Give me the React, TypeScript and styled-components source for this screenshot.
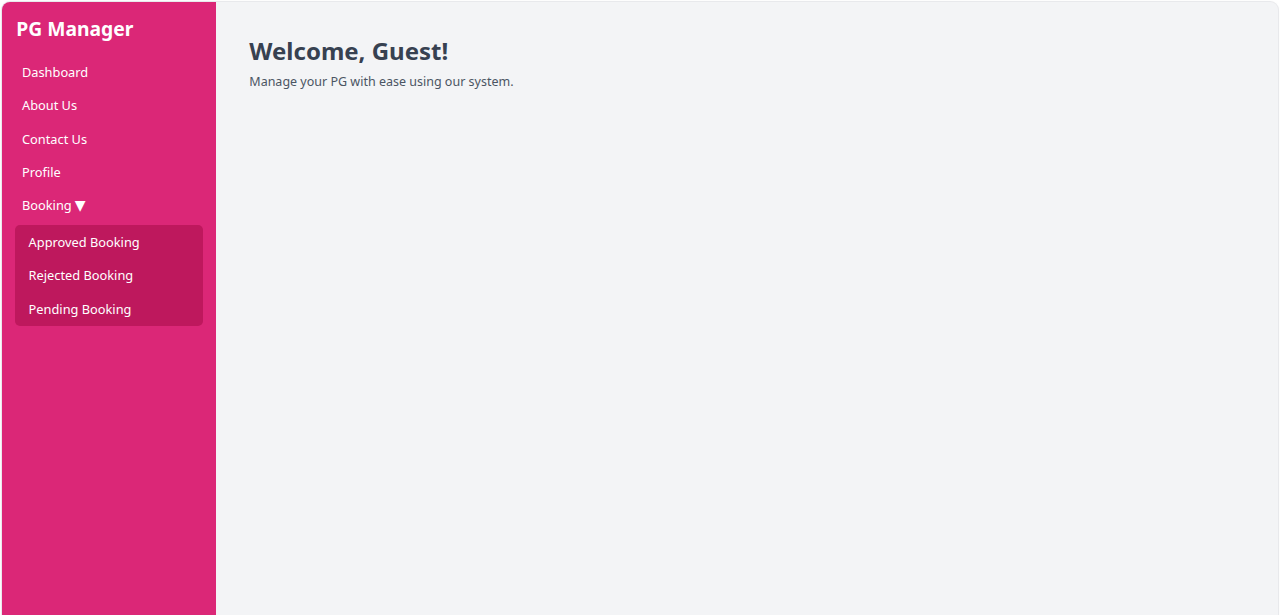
import React, { useState } from "react";
import styled, { createGlobalStyle } from "styled-components";

const GlobalStyle = createGlobalStyle`
  html, body {
    margin: 0;
    padding: 0;
    background: #ffffff;
  }
  body {
    font-family: "Noto Sans", "Open Sans", sans-serif;
    padding: 2px 2px 0 2px;
    overflow: hidden;
  }
  * { box-sizing: border-box; }
`;

const Shell = styled.div`
  display: flex;
  height: 640px;
  border-radius: 8px;
  overflow: hidden;
  background: #f3f4f6;
  box-shadow: 0 0 0 1px #e8e9ec, 0 0 3px rgba(0, 0, 0, 0.06);
`;

const Sidebar = styled.aside`
  width: 214px;
  flex-shrink: 0;
  background: #db2777;
  color: #ffffff;
  padding: 14px 13.3px 13.3px;
  display: flex;
  flex-direction: column;
`;

const Brand = styled.h1`
  margin: 0 0 12.6px 1px;
  font-size: 19.3px;
  line-height: 26.7px;
  font-weight: 700;
`;

const NavList = styled.ul`
  list-style: none;
  margin: 0;
  padding: 0;
`;

const NavItem = styled.li<{ $sub?: boolean }>`
  padding: 6.67px ${(p) => (p.$sub ? "13.3px" : "6.67px")};
  font-size: 12.8px;
  line-height: 20px;
  cursor: pointer;
  border-radius: 4px;
  user-select: none;
`;

const Caret = styled.span`
  font-family: "DejaVu Sans", sans-serif;
  font-size: 14px;
  line-height: 1;
  margin-left: 3px;
`;

const SubMenu = styled.ul`
  list-style: none;
  margin: 3.6px 0 0;
  padding: 0 0 0.6px;
  background: #be185d;
  border-radius: 5px;
`;

const Main = styled.main`
  flex: 1;
  padding: 33.6px 33.3px;
`;

const Heading = styled.h2`
  margin: 0;
  font-size: 24px;
  line-height: 30px;
  font-weight: 700;
  color: #374151;
`;

const Lead = styled.p`
  margin: 6.67px 0 0;
  font-size: 12.5px;
  line-height: 20px;
  color: #4b5563;
`;

const links = ["Dashboard", "About Us", "Contact Us", "Profile"];
const bookings = ["Approved Booking", "Rejected Booking", "Pending Booking"];

export default function App() {
  const [open, setOpen] = useState(true);
  return (
    <>
      <GlobalStyle />
      <Shell>
        <Sidebar>
          <Brand>PG Manager</Brand>
          <NavList>
            {links.map((l) => (
              <NavItem key={l}>{l}</NavItem>
            ))}
            <NavItem onClick={() => setOpen(!open)}>
              Booking<Caret>▼</Caret>
            </NavItem>
            {open && (
              <SubMenu>
                {bookings.map((b) => (
                  <NavItem key={b} $sub>
                    {b}
                  </NavItem>
                ))}
              </SubMenu>
            )}
          </NavList>
        </Sidebar>
        <Main>
          <Heading>Welcome, Guest!</Heading>
          <Lead>Manage your PG with ease using our system.</Lead>
        </Main>
      </Shell>
    </>
  );
}
